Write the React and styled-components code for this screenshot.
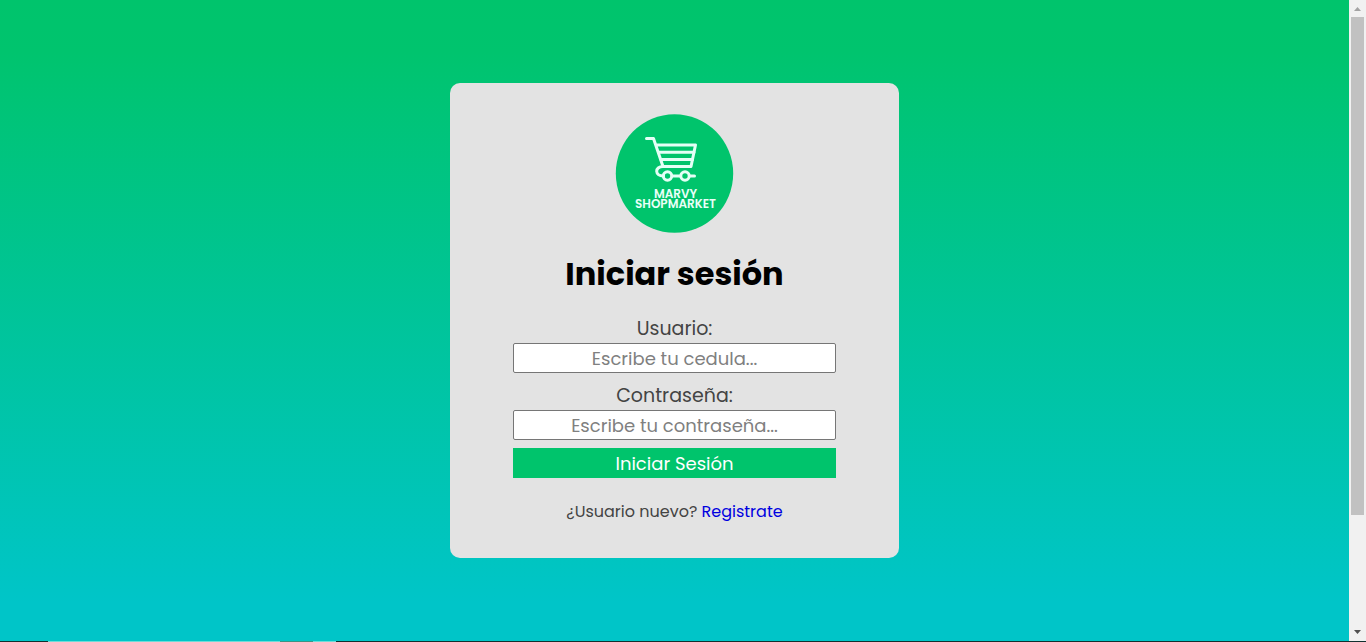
import React from "react";
import styled, { createGlobalStyle } from "styled-components";

const GlobalStyle = createGlobalStyle`
  * { box-sizing: border-box; }
  body {
    margin: 0;
    font-family: Poppins, Inter, "Open Sans", sans-serif;
    color: #444;
  }
`;

const Window = styled.div`
  display: flex;
  flex-direction: column;
  height: 100vh;
  overflow: hidden;
`;

const Viewport = styled.div`
  display: flex;
  flex: 1;
  min-height: 0;
`;

const Page = styled.main`
  flex: 1;
  display: flex;
  align-items: center;
  justify-content: center;
  background: linear-gradient(to bottom, #00c46c 0%, #00c46e 8%, #00c5c8 94%, #00c5c8 100%);
`;

const Card = styled.section`
  width: calc(100% / 3);
  min-width: 320px;
  padding: 31px 0 33px;
  display: flex;
  flex-direction: column;
  align-items: center;
  background: #e3e3e3;
  border-radius: 10px;
`;

const Logo = styled.svg`
  display: block;
  width: 120px;
  height: 120px;
`;

const LogoText = styled.text`
  font-family: Poppins, Inter, sans-serif;
  font-size: 12px;
  font-weight: 600;
  text-anchor: middle;
  fill: #e8fff8;
`;

const Title = styled.h1`
  margin: 16px 0;
  font-size: 32px;
  line-height: 48px;
  font-weight: 700;
  color: #000;
`;

const Form = styled.form`
  width: 72%;
  display: flex;
  flex-direction: column;
  gap: 8px;
`;

const Field = styled.div`
  display: flex;
  flex-direction: column;
  text-align: center;
`;

const Label = styled.label`
  font-size: 19px;
  line-height: 29px;
`;

const Input = styled.input`
  width: 100%;
  height: 30px;
  padding: 0 2px;
  border: 1px solid #767676;
  border-radius: 2px;
  background: #fff;
  font: inherit;
  font-size: 18px;
  text-align: center;
  &::placeholder { color: #808080; opacity: 1; }
`;

const Submit = styled.button`
  height: 30px;
  padding: 0;
  border: 0;
  background: #00c46c;
  color: #fff;
  font: inherit;
  font-size: 18px;
`;

const Register = styled.p`
  margin: 20px 0 0;
  font-size: 16px;
  line-height: 27px;
`;

const Link = styled.a`
  color: #0000e0;
  text-decoration: none;
`;

const Scrollbar = styled.div`
  width: 17px;
  display: flex;
  flex-direction: column;
  align-items: center;
  background: #f1f1f1;
`;

const Arrow = styled.svg`
  width: 17px;
  height: 17px;
  flex: none;
  fill: ${(p) => p.$color};
`;

const Track = styled.div`
  flex: 1;
  width: 13px;
`;

const Thumb = styled.div`
  height: 82%;
  background: #c1c1c1;
`;

const Taskbar = styled.div`
  height: 1px;
  display: flex;
  padding-left: 48px;
  background: #12302f;
`;

const Task = styled.div`
  width: ${(p) => p.$width}px;
  background: ${(p) => p.$color};
`;

function ShopLogo() {
  return (
    <Logo viewBox="0 0 120 120" role="img" aria-label="Marvy Shopmarket">
      <ellipse cx="59.5" cy="59.5" rx="58.7" ry="59.3" fill="#00c46c" />
      <g fill="none" stroke="#e4fff6" strokeWidth="3" strokeLinecap="round" strokeLinejoin="round">
        <path d="M31.5 24.5H38.5L48 52.5H76L80.5 31H41.5" />
        <path d="M43.5 38.3H79M46 45.4H77.5" />
        <path d="M48 52.5C39.5 52.5 39.5 62 48.5 62M57.5 62H65.5M74.5 62H79.5" />
        <circle cx="52.5" cy="62" r="4.2" />
        <circle cx="70" cy="62" r="4.2" />
      </g>
      <LogoText>
        <tspan x="60.5" y="84">MARVY</tspan>
        <tspan x="60.5" y="94">SHOPMARKET</tspan>
      </LogoText>
    </Logo>
  );
}

export default function App() {
  return (
    <Window>
      <GlobalStyle />
      <Viewport>
        <Page>
          <Card>
            <ShopLogo />
            <Title>Iniciar sesión</Title>
            <Form onSubmit={(e) => e.preventDefault()}>
              <Field>
                <Label htmlFor="usuario">Usuario:</Label>
                <Input id="usuario" type="text" placeholder="Escribe tu cedula..." />
              </Field>
              <Field>
                <Label htmlFor="clave">Contraseña:</Label>
                <Input id="clave" type="password" placeholder="Escribe tu contraseña..." />
              </Field>
              <Submit type="submit">Iniciar Sesión</Submit>
            </Form>
            <Register>
              ¿Usuario nuevo? <Link href="#registro">Registrate</Link>
            </Register>
          </Card>
        </Page>
        <Scrollbar aria-hidden="true">
          <Arrow viewBox="0 0 17 17" $color="#a3a3a3">
            <path d="M5 11L8.5 7L12 11Z" />
          </Arrow>
          <Track>
            <Thumb />
          </Track>
          <Arrow viewBox="0 0 17 17" $color="#505050">
            <path d="M5 6L8.5 10L12 6Z" />
          </Arrow>
        </Scrollbar>
      </Viewport>
      <Taskbar aria-hidden="true">
        <Task $width={232} $color="#6fdcd8" />
        <Task $width={33} $color="#3c9484" />
        <Task $width={23} $color="#6fdcd8" />
      </Taskbar>
    </Window>
  );
}
